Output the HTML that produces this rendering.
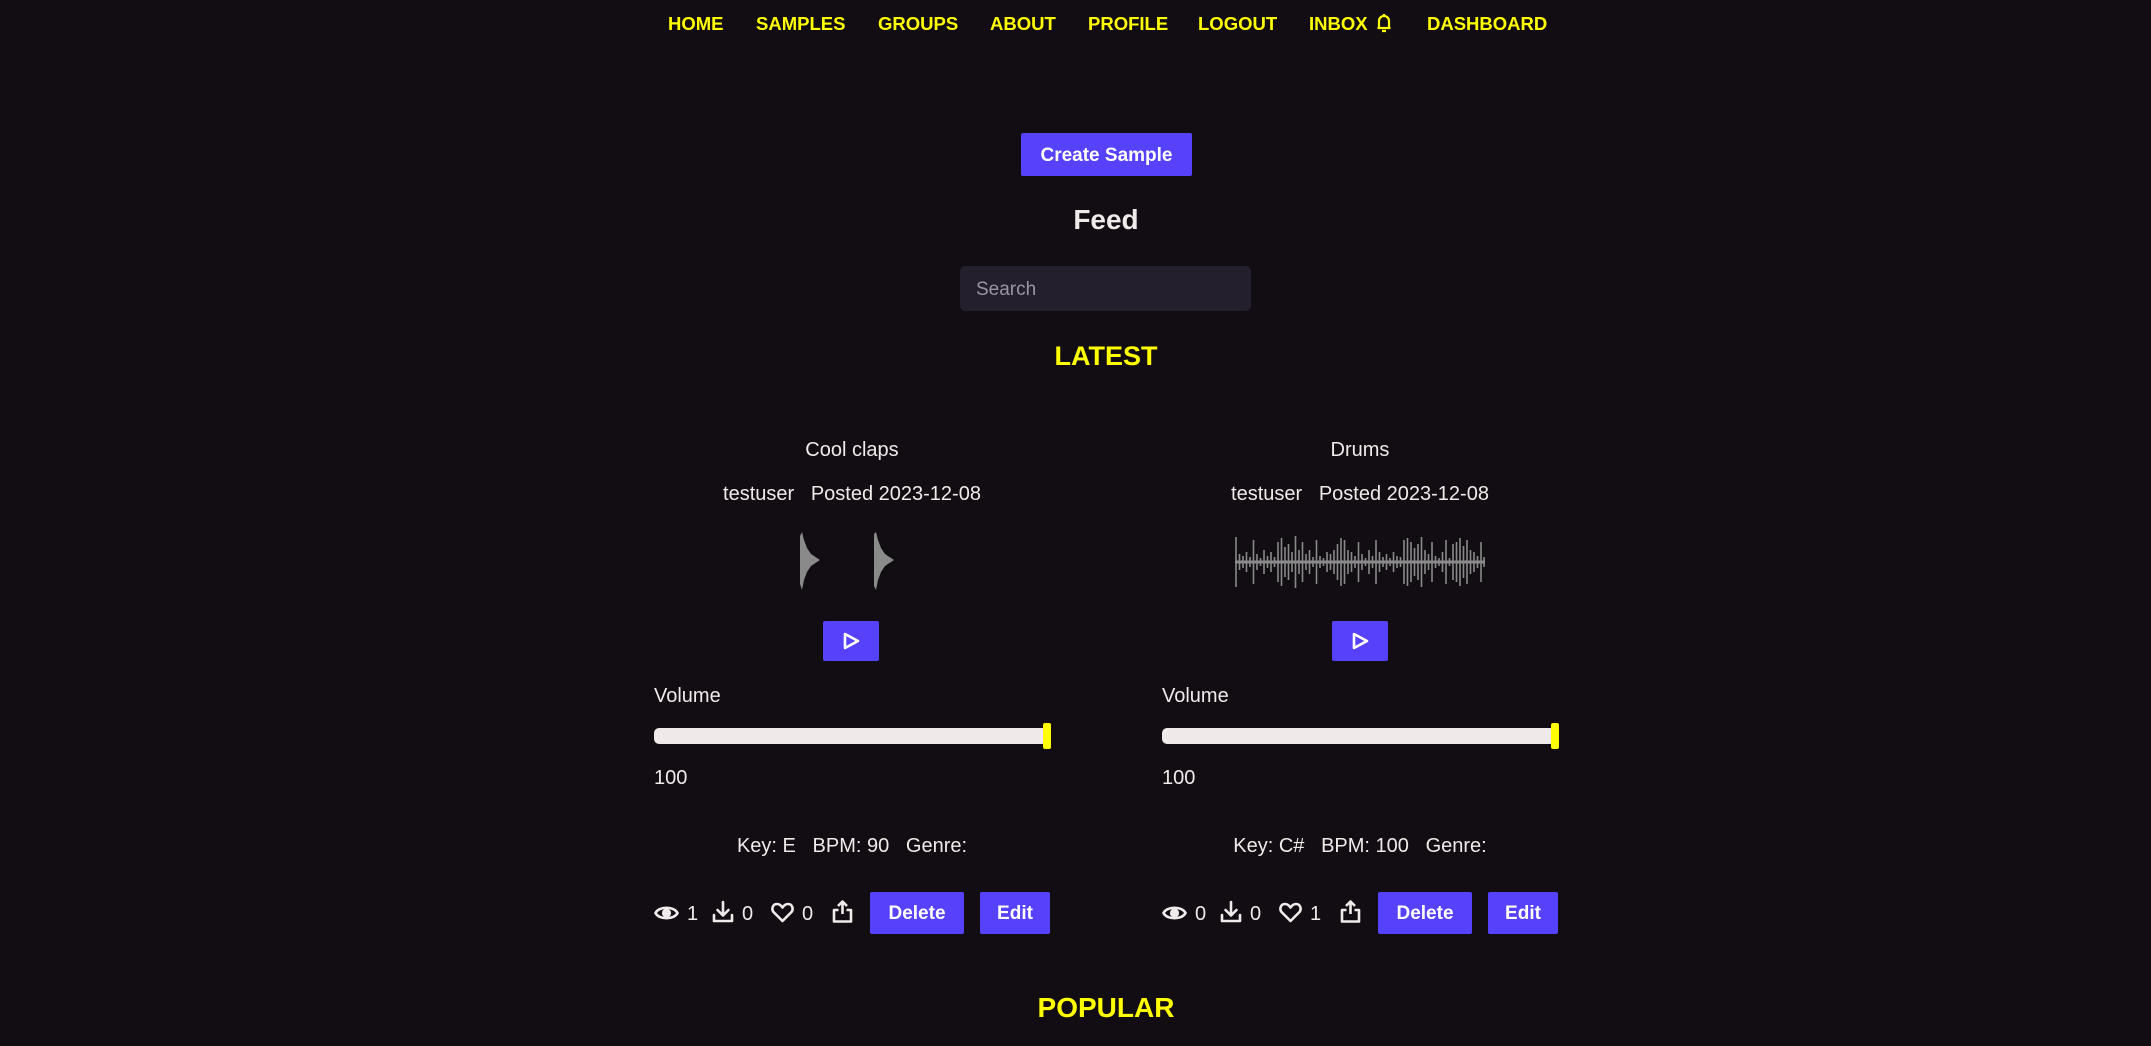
<!DOCTYPE html>
<html><head><meta charset="utf-8"><style>
*{margin:0;padding:0;box-sizing:border-box}
body{width:2151px;height:1046px;background:#110d12;color:#f0eaea;font-family:"Liberation Sans",sans-serif;position:relative;overflow:hidden}
.a{position:absolute;white-space:nowrap}
.nav{font-weight:bold;font-size:18.5px;color:#ffff00;top:13px}
.btn{position:absolute;background:#5542fa;color:#fff;font-weight:bold;font-size:19px;display:flex;align-items:center;justify-content:center;border-radius:2px}
.t{font-size:20px}
.c{text-align:center}
.hc{left:60px;width:2092px}
.track{position:absolute;height:16px;background:#efe9e9;border-radius:5px}
.thumb{position:absolute;width:8px;height:26px;background:#ffff00;border-radius:2px}
</style></head><body>
<div class="a nav" style="left:668px">HOME</div>
<div class="a nav" style="left:756px">SAMPLES</div>
<div class="a nav" style="left:878px">GROUPS</div>
<div class="a nav" style="left:990px">ABOUT</div>
<div class="a nav" style="left:1088px">PROFILE</div>
<div class="a nav" style="left:1198px">LOGOUT</div>
<div class="a nav" style="left:1309px">INBOX</div>
<svg class="a" style="left:1376px;top:12px" width="16" height="22" viewBox="0 0 16 22" fill="none" stroke="#ffff00" stroke-width="2.2"><path d="M3 16V9a5 5 0 0 1 10 0v7H3zM1.5 16h13M8 2v2M6 19h4"/></svg>
<div class="a nav" style="left:1427px">DASHBOARD</div>

<div class="btn" style="left:1021px;top:133px;width:171px;height:43px;padding-top:2px">Create Sample</div>
<div class="a c hc" style="top:204px;font-size:28px;font-weight:bold">Feed</div>
<div class="a" style="left:960px;top:266px;width:291px;height:45px;background:#241f2d;border-radius:5px;color:#9a96a0;font-size:19px;padding:13px 0 0 16px">Search</div>
<div class="a c hc" style="top:341px;font-size:27px;font-weight:bold;color:#ffff00">LATEST</div>

<!-- card 1 -->
<div class="a c t" style="left:654px;width:396px;top:439px">Cool claps</div>
<div class="a c t" style="left:654px;width:396px;top:483px">testuser&nbsp;&nbsp;&nbsp;Posted 2023-12-08</div>
<svg class="a" style="left:800px;top:532px" width="100" height="58" viewBox="0 0 100 58" fill="#8a8a8a"><polygon points="0,4 2,0 4,8 7,16 11,22 20,28 11,34 7,40 4,48 2,58 0,52"/><polygon points="74,2 76,0 78,8 81,16 85,22 94,28 85,34 81,40 78,48 76,58 74,54"/></svg>
<div class="btn" style="left:823px;top:621px;width:56px;height:40px"><svg width="20" height="20" viewBox="0 0 20 20" fill="none" stroke="#fff" stroke-width="2.6" stroke-linejoin="round"><path d="M4 3l13 7-13 7z"/></svg></div>
<div class="a t" style="left:654px;top:685px">Volume</div>
<div class="track" style="left:654px;top:728px;width:393px"></div>
<div class="thumb" style="left:1043px;top:723px"></div>
<div class="a t" style="left:654px;top:767px">100</div>
<div class="a c t" style="left:654px;width:396px;top:835px">Key: E&nbsp;&nbsp;&nbsp;BPM: 90&nbsp;&nbsp;&nbsp;Genre:</div>

<!-- card 2 -->
<div class="a c t" style="left:1162px;width:396px;top:439px">Drums</div>
<div class="a c t" style="left:1162px;width:396px;top:483px">testuser&nbsp;&nbsp;&nbsp;Posted 2023-12-08</div>
<svg class="a" style="left:1235px;top:532px" width="251" height="60" viewBox="0 0 251 60" fill="none" stroke="#8a8a8a" stroke-width="1.6"><path d="M0 30H250" stroke-width="3"/><path d="M1 5v50M4.5 22v16M8 24v12M11.5 20v20M15 25v10M18.5 8v44M22 22v16M25.5 26v8M29 18v24M32.5 24v12M36 20v20M39.5 25v10M43 10v40M46.5 6v48M50 15v30M53.5 12v36M57 20v20M60.5 4v52M64 18v24M67.5 10v40M71 22v16M74.5 18v24M78 25v10M81.5 8v44M85 24v12M88.5 26v8M92 20v20M95.5 22v16M99 18v24M102.5 12v36M106 6v48M109.5 8v44M113 18v24M116.5 20v20M120 24v12M123.5 10v40M127 22v16M130.5 26v8M134 18v24M137.5 24v12M141 8v44M144.5 20v20M148 25v10M151.5 22v16M155 26v8M158.5 20v20M162 24v12M165.5 25v10M169 8v44M172.5 6v48M176 10v40M179.5 16v28M183 12v36M186.5 5v50M190 18v24M193.5 22v16M197 10v40M200.5 24v12M204 26v8M207.5 20v20M211 8v44M214.5 26v8M218 12v36M221.5 10v40M225 6v48M228.5 14v32M232 8v44M235.5 18v24M239 20v20M242.5 24v12M246 10v40M249 25v10"/></svg>
<div class="btn" style="left:1332px;top:621px;width:56px;height:40px"><svg width="20" height="20" viewBox="0 0 20 20" fill="none" stroke="#fff" stroke-width="2.6" stroke-linejoin="round"><path d="M4 3l13 7-13 7z"/></svg></div>
<div class="a t" style="left:1162px;top:685px">Volume</div>
<div class="track" style="left:1162px;top:728px;width:393px"></div>
<div class="thumb" style="left:1551px;top:723px"></div>
<div class="a t" style="left:1162px;top:767px">100</div>
<div class="a c t" style="left:1162px;width:396px;top:835px">Key: C#&nbsp;&nbsp;&nbsp;BPM: 100&nbsp;&nbsp;&nbsp;Genre:</div>

<!-- action rows -->
<div class="a" style="left:654px;top:892px;width:396px;height:42px;">
 <svg class="a" style="left:0;top:11px" width="25" height="20" viewBox="0 0 25 20" fill="none" stroke="#f0eaea" stroke-width="2.6"><path d="M1.5 10C5 3 20 3 23.5 10 20 17 5 17 1.5 10z"/><circle cx="12.5" cy="10" r="3.3" fill="#f0eaea"/></svg>
 <div class="a t" style="left:33px;top:11px">1</div>
 <svg class="a" style="left:58px;top:8px" width="22" height="24" viewBox="0 0 22 24" fill="none" stroke="#f0eaea" stroke-width="2.6" stroke-linecap="round" stroke-linejoin="round"><path d="M11 2v13M5.5 10l5.5 5.5 5.5-5.5M2 15v6h18v-6"/></svg>
 <div class="a t" style="left:88px;top:11px">0</div>
 <svg class="a" style="left:117px;top:10px" width="23" height="21" viewBox="0 0 23 21" fill="none" stroke="#f0eaea" stroke-width="2.6" stroke-linejoin="round"><path d="M11.5 19L3 10.5C0 7.5 1.5 2 6 2c2.5 0 4.2 1.6 5.5 3.5C12.8 3.6 14.5 2 17 2c4.5 0 6 5.5 3 8.5z"/></svg>
 <div class="a t" style="left:148px;top:11px">0</div>
 <svg class="a" style="left:178px;top:8px" width="21" height="24" viewBox="0 0 21 24" fill="none" stroke="#f0eaea" stroke-width="2.6" stroke-linejoin="round"><path d="M10.5 14V2M6 6l4.5-4.5L15 6M6.5 10H2v11.5h17V10h-4.5"/></svg>
 <div class="btn" style="left:216px;top:0;width:94px;height:42px;padding-top:2px">Delete</div>
 <div class="btn" style="left:326px;top:0;width:70px;height:42px;padding-top:2px">Edit</div>
</div>
<div class="a" style="left:1162px;top:892px;width:396px;height:42px;">
 <svg class="a" style="left:0;top:11px" width="25" height="20" viewBox="0 0 25 20" fill="none" stroke="#f0eaea" stroke-width="2.6"><path d="M1.5 10C5 3 20 3 23.5 10 20 17 5 17 1.5 10z"/><circle cx="12.5" cy="10" r="3.3" fill="#f0eaea"/></svg>
 <div class="a t" style="left:33px;top:11px">0</div>
 <svg class="a" style="left:58px;top:8px" width="22" height="24" viewBox="0 0 22 24" fill="none" stroke="#f0eaea" stroke-width="2.6" stroke-linecap="round" stroke-linejoin="round"><path d="M11 2v13M5.5 10l5.5 5.5 5.5-5.5M2 15v6h18v-6"/></svg>
 <div class="a t" style="left:88px;top:11px">0</div>
 <svg class="a" style="left:117px;top:10px" width="23" height="21" viewBox="0 0 23 21" fill="none" stroke="#f0eaea" stroke-width="2.6" stroke-linejoin="round"><path d="M11.5 19L3 10.5C0 7.5 1.5 2 6 2c2.5 0 4.2 1.6 5.5 3.5C12.8 3.6 14.5 2 17 2c4.5 0 6 5.5 3 8.5z"/></svg>
 <div class="a t" style="left:148px;top:11px">1</div>
 <svg class="a" style="left:178px;top:8px" width="21" height="24" viewBox="0 0 21 24" fill="none" stroke="#f0eaea" stroke-width="2.6" stroke-linejoin="round"><path d="M10.5 14V2M6 6l4.5-4.5L15 6M6.5 10H2v11.5h17V10h-4.5"/></svg>
 <div class="btn" style="left:216px;top:0;width:94px;height:42px;padding-top:2px">Delete</div>
 <div class="btn" style="left:326px;top:0;width:70px;height:42px;padding-top:2px">Edit</div>
</div>

<div class="a c hc" style="top:992px;font-size:28px;font-weight:bold;color:#ffff00">POPULAR</div>
</body></html>
